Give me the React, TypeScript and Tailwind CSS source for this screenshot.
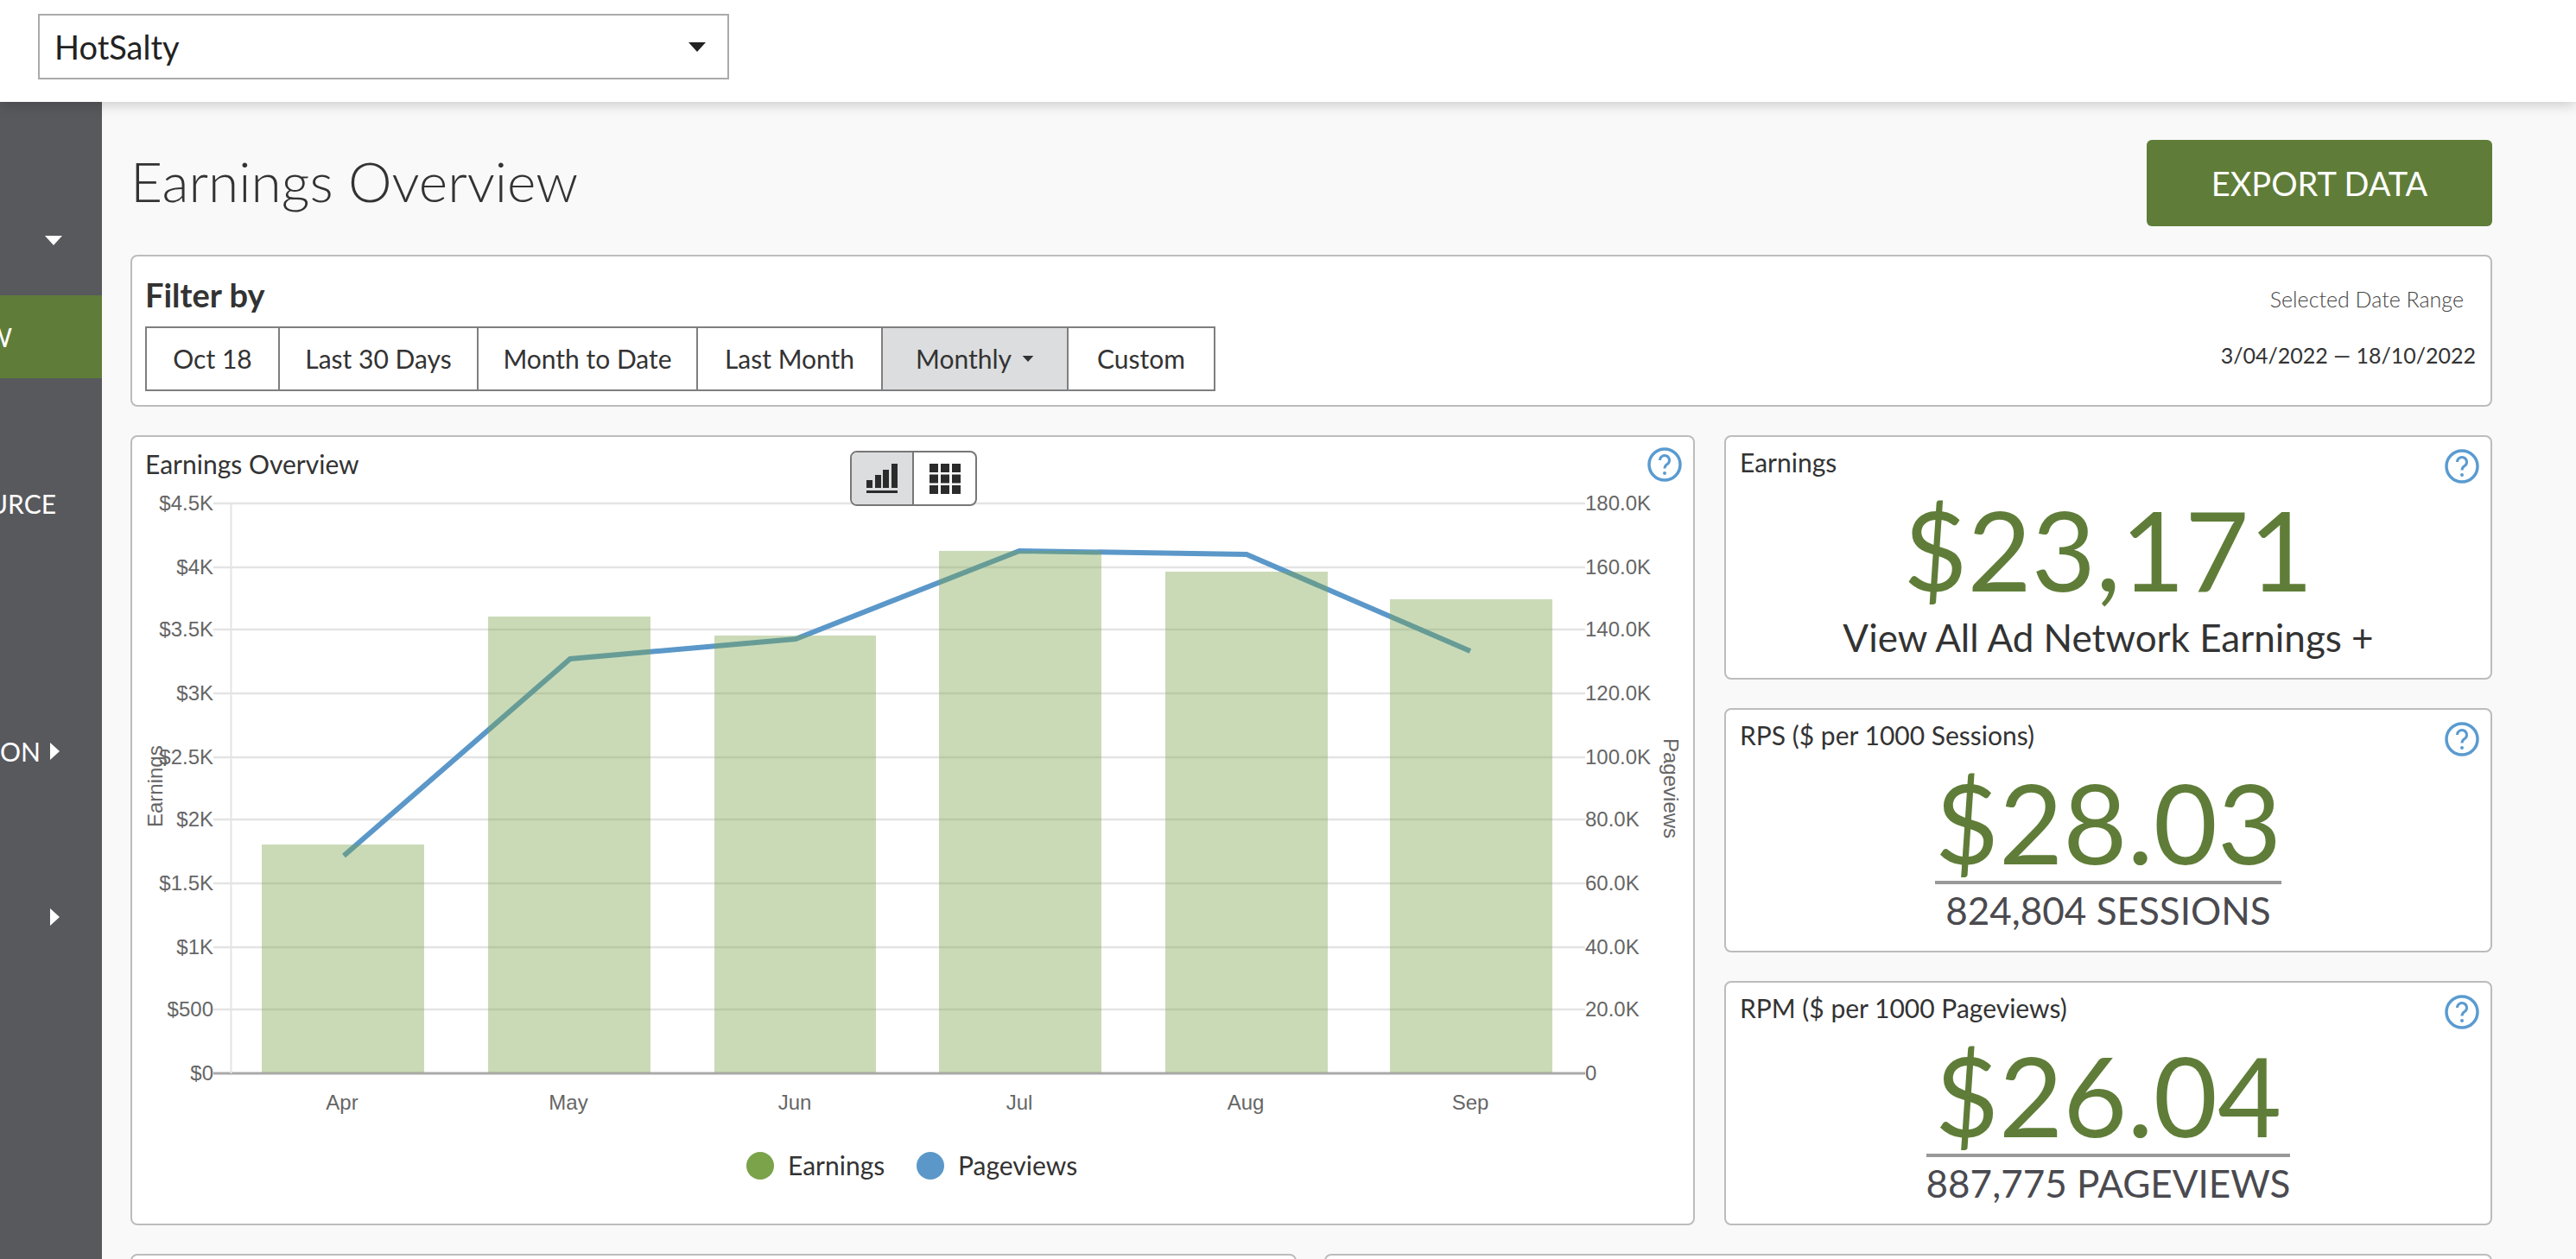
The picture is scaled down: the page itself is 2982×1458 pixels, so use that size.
const FONT = "font-['Lato','Noto_Sans',sans-serif]";

const yTicks = ["$4.5K", "$4K", "$3.5K", "$3K", "$2.5K", "$2K", "$1.5K", "$1K", "$500", "$0"];
const rTicks = ["180.0K", "160.0K", "140.0K", "120.0K", "100.0K", "80.0K", "60.0K", "40.0K", "20.0K", "0"];
const gridY = [583, 657, 729, 803, 877, 949, 1023, 1097, 1169, 1243];

const bars = [
  { label: "Apr", x: 303, w: 188, top: 978, cx: 396 },
  { label: "May", x: 565, w: 188, top: 714, cx: 658 },
  { label: "Jun", x: 827, w: 187, top: 736, cx: 920 },
  { label: "Jul", x: 1087, w: 188, top: 638, cx: 1180 },
  { label: "Aug", x: 1349, w: 188, top: 662, cx: 1442 },
  { label: "Sep", x: 1609, w: 188, top: 694, cx: 1702 },
];

const ranges = [
  { label: "Oct 18", w: "w-[152px]" },
  { label: "Last 30 Days", w: "w-[230px]" },
  { label: "Month to Date", w: "w-[254px]" },
  { label: "Last Month", w: "w-[214px]" },
  { label: "Monthly", w: "w-[215px]", active: true },
  { label: "Custom", w: "w-[170px]" },
];

function HelpIcon() {
  return (
    <svg width="40" height="40" viewBox="0 0 40 40" fill="none" stroke="#5a9bd0" className="shrink-0">
      <circle cx="20" cy="20" r="18" strokeWidth="3.5" />
      <path d="M14.5 15a5.5 5.5 0 1 1 8.5 4.6c-2 1.3-3 2.4-3 5" strokeWidth="3" />
      <circle cx="20" cy="30" r="2" fill="#5a9bd0" stroke="none" />
    </svg>
  );
}

function Caret({ className, color }: { className?: string; color: string }) {
  return (
    <svg width="20" height="11" viewBox="0 0 20 11" className={className}>
      <polygon points="0,0 20,0 10,11" fill={color} />
    </svg>
  );
}

function CaretRight({ className }: { className?: string }) {
  return (
    <svg width="11" height="20" viewBox="0 0 11 20" className={className}>
      <polygon points="0,0 11,10 0,20" fill="#ffffff" />
    </svg>
  );
}

function Chart() {
  return (
    <svg width="1807" height="843" viewBox="153 574 1807 843" className="block">
      {gridY.map((y, i) => (
        <line key={y} x1="247" x2="1835" y1={y} y2={y} stroke={i === 9 ? "#a9a9a9" : "#e4e4e4"} strokeWidth={i === 9 ? 3 : 2.5} />
      ))}
      <line x1="267.5" x2="267.5" y1="583" y2="1243" stroke="#e4e4e4" strokeWidth="2" />
      <polyline
        points="398,991 660,763 921,740 1180,638 1443,642 1702,754"
        fill="none"
        stroke="#5b98c9"
        strokeWidth="6"
      />
      {bars.map((b) => (
        <rect key={b.label} x={b.x} y={b.top} width={b.w} height={1242 - b.top} fill="#7aa34a" fillOpacity="0.4" />
      ))}
      <g fontFamily="'Liberation Sans', Arial, sans-serif" fontSize="24" fill="#666666">
        {yTicks.map((t, i) => (
          <text key={t} x="247" y={gridY[i] + 8} textAnchor="end">{t}</text>
        ))}
        {rTicks.map((t, i) => (
          <text key={t} x="1835" y={gridY[i] + 8}>{t}</text>
        ))}
        {bars.map((b) => (
          <text key={b.label} x={b.cx} y="1285" textAnchor="middle">{b.label}</text>
        ))}
        <text transform="translate(188 958) rotate(-90)">Earnings</text>
        <text transform="translate(1926 855) rotate(90)">Pageviews</text>
      </g>
      <circle cx="880" cy="1350" r="16" fill="#7aa34a" />
      <circle cx="1077" cy="1350" r="16" fill="#5b98c9" />
      <g fontFamily="Lato, 'Noto Sans', sans-serif" fontSize="30" fill="#333333">
        <text x="912" y="1361">Earnings</text>
        <text x="1109" y="1361">Pageviews</text>
      </g>
    </svg>
  );
}

function MetricCard({ title, value, sub, line }: { title: string; value: string; sub: string; line?: boolean }) {
  return (
    <div className="box-border flex h-[283px] flex-col rounded-lg border-2 border-[#bcbcbc] bg-white">
      <div className="flex h-[62px] items-start justify-between pl-4 pr-[13px]">
        <span className="mt-[11px] text-[30px] leading-[36px] text-[#333]">{title}</span>
        <span className="mt-[14px]"><HelpIcon /></span>
      </div>
      <div className="flex justify-center">
        <div className="flex flex-col text-center">
          <div className={`-mt-[0px] h-[140px] border-b-4 text-[128px] leading-[136px] text-[#5f7d38] ${line ? "border-[#999]" : "border-transparent"}`}>
            {value}
          </div>
          <div className={`mt-0.5 text-[44px] leading-[56px] ${line ? "text-[#4a4a4f]" : "text-[#333]"}`}>{sub}</div>
        </div>
      </div>
    </div>
  );
}

export default function App() {
  return (
    <div className={`flex h-[1458px] w-full flex-col overflow-hidden bg-[#f9f9f9] ${FONT}`}>
      <header className="relative z-10 flex h-[118px] shrink-0 items-start bg-white shadow-[0_4px_14px_rgba(0,0,0,0.18)]">
        <div className="ml-11 mt-4 box-border flex h-[76px] w-[800px] items-center justify-between border-2 border-[#aaa] pl-[17px] pr-[25px]">
          <span className="text-[38px] text-[#222]">HotSalty</span>
          <Caret color="#222222" />
        </div>
      </header>

      <div className="flex min-h-0 flex-1">
        <aside className="flex w-[118px] shrink-0 flex-col overflow-hidden bg-[#58595d] text-[30px] text-white">
          <div className="mt-[112px] flex h-24 items-center justify-end pr-[46px]"><Caret color="#ffffff" /></div>
          <div className="mt-4 flex h-24 items-center justify-end whitespace-nowrap bg-[#5f7d38] pr-[104px]">OVERVIEW</div>
          <div className="mt-[97px] flex h-24 items-center justify-end whitespace-nowrap pr-[53px]">BY SOURCE</div>
          <div className="mt-[191px] flex h-24 items-center justify-end whitespace-nowrap pr-[49px]">
            LOCATION
            <CaretRight className="ml-[11px] shrink-0" />
          </div>
          <div className="mt-24 flex h-24 items-center justify-end pr-[49px]"><CaretRight /></div>
        </aside>

        <main className="flex min-w-0 flex-1 flex-col pl-[33px] pr-[97px]">
          <div className="flex shrink-0 items-start justify-between pt-11">
            <h1 className="mt-[8px] text-[64px] font-light leading-[80px] text-[#333]">Earnings Overview</h1>
            <button className="h-[100px] w-[400px] rounded-md bg-[#5f7d38] text-[38px] text-white">EXPORT DATA</button>
          </div>

          <section className="mt-[33px] box-border flex h-[176px] shrink-0 justify-between rounded-lg border-2 border-[#bcbcbc] bg-white pl-[15px] pr-[17px]">
            <div>
              <h2 className="mt-5 text-[38px] font-bold leading-[48px] text-[#333]">Filter by</h2>
              <div className="mt-[13px] box-border flex h-[75px] w-fit border-2 border-[#7f7f7f]">
                {ranges.map((r, i) => (
                  <div
                    key={r.label}
                    className={`flex items-center justify-center gap-3 text-[30px] text-[#333] ${r.w} ${i > 0 ? "border-l-2 border-[#7f7f7f]" : ""} ${r.active ? "bg-[#dcdddf]" : ""}`}
                  >
                    {r.label}
                    {r.active && <Caret color="#333333" className="h-[7px] w-[14px]" />}
                  </div>
                ))}
              </div>
            </div>
            <div className="flex flex-col items-end pt-[33px] text-[25px] leading-8">
              <div className="mr-[14px] font-light text-[#444]">Selected Date Range</div>
              <div className="mt-[33px] text-[#333]">3/04/2022 — 18/10/2022</div>
            </div>
          </section>

          <div className="mt-[33px] flex shrink-0 gap-[34px]">
            <section className="relative box-border h-[915px] w-[1811px] shrink-0 rounded-lg border-2 border-[#bcbcbc] bg-white">
              <div className="flex h-[68px] items-start justify-between pl-[15px] pr-[13px]">
                <span className="mt-[13px] text-[30px] leading-9 text-[#333]">Earnings Overview</span>
                <span className="mt-3"><HelpIcon /></span>
              </div>
              <div className="absolute left-[831px] top-4 z-10 box-border flex h-[64px] w-[147px] overflow-hidden rounded-lg border-2 border-[#777] bg-white">
                <div className="flex w-[72px] items-center justify-center border-r-2 border-[#777] bg-[#dcdddf]">
                  <svg width="36" height="34" viewBox="0 0 36 34" fill="#2b2b2b">
                    <rect x="0" y="19" width="7" height="9" />
                    <rect x="10" y="13" width="7" height="15" />
                    <rect x="19" y="7" width="7" height="21" />
                    <rect x="29" y="0" width="7" height="28" />
                    <rect x="0" y="31" width="36" height="3" />
                  </svg>
                </div>
                <div className="flex flex-1 items-center justify-center">
                  <svg width="36" height="35" viewBox="0 0 36 35" fill="#2b2b2b">
                    <rect x="0" y="0" width="10" height="10" />
                    <rect x="13" y="0" width="10" height="10" />
                    <rect x="26" y="0" width="10" height="10" />
                    <rect x="0" y="12.5" width="10" height="10" />
                    <rect x="13" y="12.5" width="10" height="10" />
                    <rect x="26" y="12.5" width="10" height="10" />
                    <rect x="0" y="25" width="10" height="10" />
                    <rect x="13" y="25" width="10" height="10" />
                    <rect x="26" y="25" width="10" height="10" />
                  </svg>
                </div>
              </div>
              <Chart />
            </section>

            <div className="flex min-w-0 flex-1 flex-col gap-[33px]">
              <MetricCard title="Earnings" value="$23,171" sub="View All Ad Network Earnings +" />
              <MetricCard title="RPS ($ per 1000 Sessions)" value="$28.03" sub="824,804 SESSIONS" line />
              <MetricCard title="RPM ($ per 1000 Pageviews)" value="$26.04" sub="887,775 PAGEVIEWS" line />
            </div>
          </div>

          <div className="mt-[33px] flex shrink-0 gap-8">
            <div className="box-border h-[200px] w-[1350px] shrink-0 rounded-lg border-2 border-[#bcbcbc] bg-white" />
            <div className="box-border h-[200px] flex-1 rounded-lg border-2 border-[#bcbcbc] bg-white" />
          </div>
        </main>
      </div>
    </div>
  );
}
